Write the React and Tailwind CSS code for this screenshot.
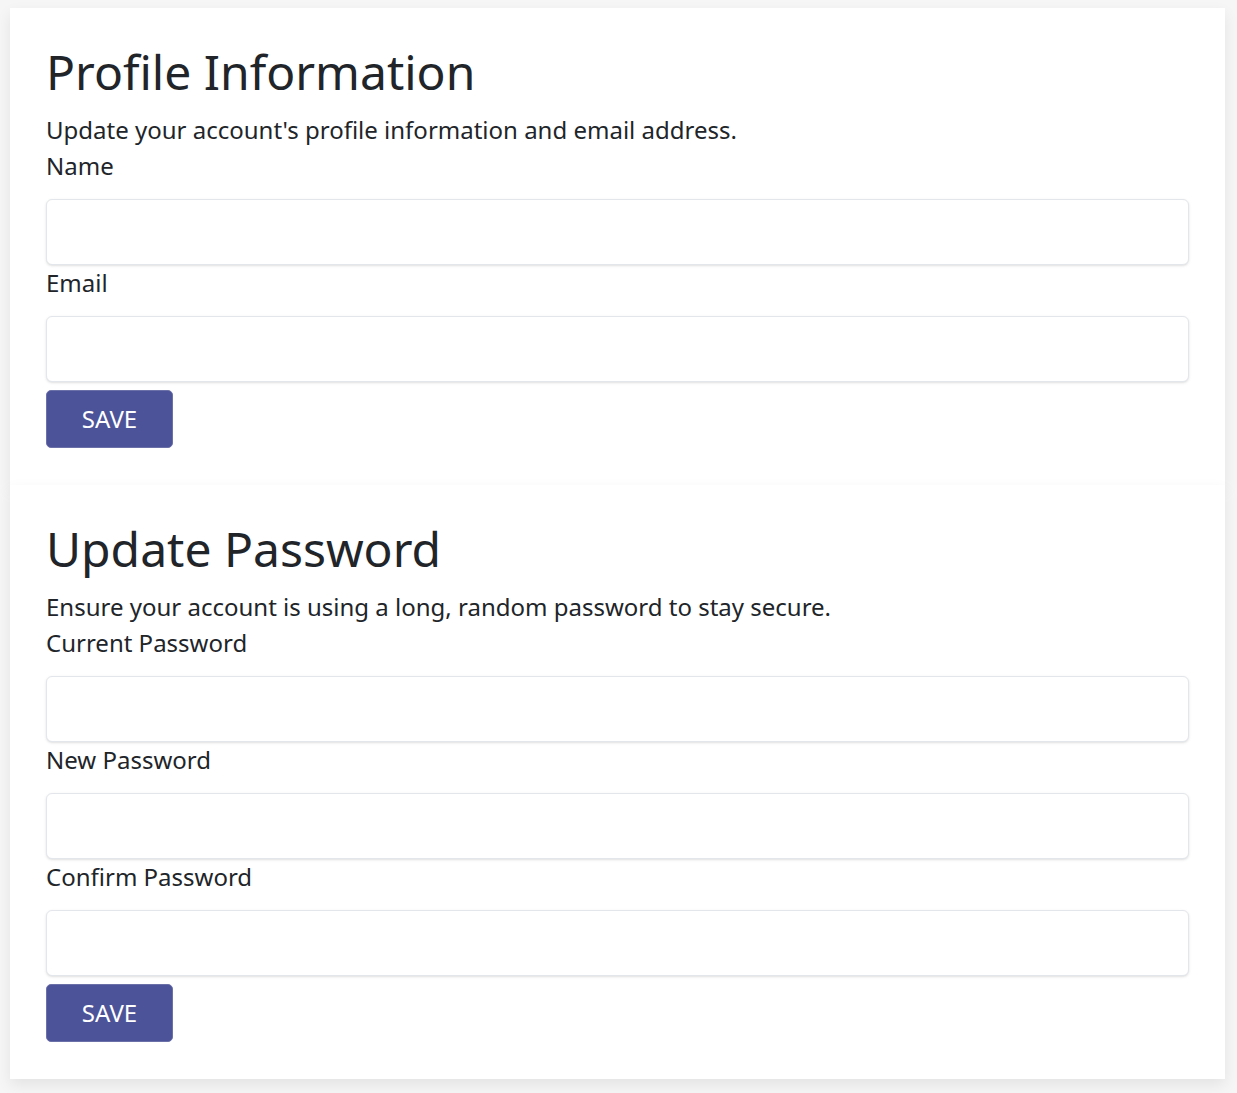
import React, { useState } from "react";

const font = { fontFamily: '"Noto Sans", "Open Sans", sans-serif' };

function Field({ label, type = "text", value, onChange }) {
  return (
    <div className="flex flex-col">
      <label className="text-[24px] leading-[36px] text-[#212529]">{label}</label>
      <input
        type={type}
        value={value}
        onChange={onChange}
        className="mt-[15px] h-[66px] w-full rounded-md border border-[#e3e6ea] bg-white px-3 text-[22px] shadow-sm outline-none"
      />
    </div>
  );
}

function Section({ title, subtitle, children }) {
  return (
    <div className="bg-white px-[36px] pt-[28px] pb-[37px] shadow-[0_6px_14px_rgba(0,0,0,0.08)]">
      <h1 className="text-[48px] leading-[72px] text-[#212529]">{title}</h1>
      <p className="mt-[4px] text-[24px] leading-[36px] text-[#212529]">{subtitle}</p>
      {children}
      <button className="mt-[8px] h-[58px] w-[127px] rounded-[5px] border border-[#6b70a8] bg-[#4c5399] text-[24px] text-white">
        SAVE
      </button>
    </div>
  );
}

export default function App() {
  const [profile, setProfile] = useState({ name: "", email: "" });
  const [pw, setPw] = useState({ current: "", next: "", confirm: "" });

  return (
    <div className="min-h-screen bg-[#f6f6f6] pt-[8px] pl-[10px] pr-[12px]" style={font}>
      <div className="flex flex-col">
        <Section title="Profile Information" subtitle="Update your account's profile information and email address.">
          <Field label="Name" value={profile.name} onChange={e => setProfile({ ...profile, name: e.target.value })} />
          <Field label="Email" type="email" value={profile.email} onChange={e => setProfile({ ...profile, email: e.target.value })} />
        </Section>
        <Section title="Update Password" subtitle="Ensure your account is using a long, random password to stay secure.">
          <Field label="Current Password" type="password" value={pw.current} onChange={e => setPw({ ...pw, current: e.target.value })} />
          <Field label="New Password" type="password" value={pw.next} onChange={e => setPw({ ...pw, next: e.target.value })} />
          <Field label="Confirm Password" type="password" value={pw.confirm} onChange={e => setPw({ ...pw, confirm: e.target.value })} />
        </Section>
      </div>
    </div>
  );
}
